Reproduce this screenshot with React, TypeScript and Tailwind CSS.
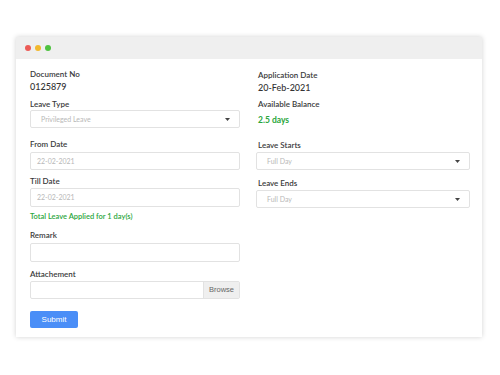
import React from 'react';

function Caret() {
  return (
    <svg width="5" height="3" viewBox="0 0 5 3" className="shrink-0">
      <path d="M0 0 L5 0 L2.5 3 Z" fill="#444" />
    </svg>
  );
}

function Label({ children, className = '' }: { children: React.ReactNode; className?: string }) {
  return <div className={`text-[8px] leading-[10px] font-semibold text-[#3a3a3a] ${className}`}>{children}</div>;
}

function Select({ value, className = '' }: { value: string; className?: string }) {
  return (
    <div className={`flex items-center justify-between border border-[#e2e2e2] rounded-[2px] bg-white pl-[10px] pr-[9px] ${className}`}>
      <span className="text-[7px] text-[#b8b8b8]">{value}</span>
      <Caret />
    </div>
  );
}

function Input({ value, className = '' }: { value?: string; className?: string }) {
  return (
    <div className={`flex items-center border border-[#e2e2e2] rounded-[2px] bg-white pl-[6px] ${className}`}>
      {value && <span className="text-[7px] text-[#b8b8b8]">{value}</span>}
    </div>
  );
}

export default function App() {
  return (
    <div className="w-[500px] h-[375px] bg-white pt-[37px] pl-[16px] font-['Lato','Noto_Sans',sans-serif]">
      <div className="w-[466px] h-[300px] bg-white shadow-[0_0_5px_rgba(0,0,0,0.18)] flex flex-col">
        <div className="h-[22px] bg-[#efefef] flex items-center gap-[4px] pl-[9px] shrink-0">
          <span className="w-[6px] h-[6px] rounded-full bg-[#ec5b56]" />
          <span className="w-[6px] h-[6px] rounded-full bg-[#f2b82e]" />
          <span className="w-[6px] h-[6px] rounded-full bg-[#4ec23f]" />
        </div>
        <div className="flex pl-[14px] gap-[16px]">
          <div className="w-[210px] flex flex-col pt-[10px]">
            <Label>Document No</Label>
            <div className="mt-[2px] text-[9px] leading-[12px] font-medium text-[#333]">0125879</div>
            <Label className="mt-[6px]">Leave Type</Label>
            <Select value="Privileged Leave" className="mt-[1px] h-[18px]" />
            <Label className="mt-[11px]">From Date</Label>
            <Input value="22-02-2021" className="mt-[3px] h-[18px]" />
            <Label className="mt-[6px]">Till Date</Label>
            <Input value="22-02-2021" className="mt-[2px] h-[19px]" />
            <div className="mt-[5px] text-[7.5px] leading-[10px] font-semibold text-[#2aa63c]">Total Leave Applied for 1 day(s)</div>
            <Label className="mt-[8px]">Remark</Label>
            <Input className="mt-[3px] h-[19px]" />
            <Label className="mt-[7px]">Attachement</Label>
            <div className="mt-[2px] h-[18px] flex border border-[#e2e2e2] rounded-[2px]">
              <div className="flex-1" />
              <div className="w-[36px] bg-[#efefef] border-l border-[#e2e2e2] flex items-center justify-center text-[7.5px] text-[#666] font-['Liberation_Sans',sans-serif]">Browse</div>
            </div>
            <div className="mt-[12px] w-[48px] h-[17px] bg-[#4a8ef7] rounded-[2px] flex items-center justify-center text-[8px] text-white font-['Liberation_Sans',sans-serif]">Submit</div>
          </div>
          <div className="w-[214px] flex flex-col pt-[11px]">
            <Label className="ml-[2px]">Application Date</Label>
            <div className="ml-[2px] mt-[2px] text-[9px] leading-[12px] font-medium text-[#333]">20-Feb-2021</div>
            <Label className="ml-[2px] mt-[5px]">Available Balance</Label>
            <div className="ml-[2px] mt-[5px] text-[8.5px] leading-[12px] font-bold text-[#2aa63c]">2.5 days</div>
            <Label className="ml-[2px] mt-[14px]">Leave Starts</Label>
            <Select value="Full Day" className="mt-[2px] h-[18px]" />
            <Label className="ml-[2px] mt-[8px]">Leave Ends</Label>
            <Select value="Full Day" className="mt-[2px] h-[18px]" />
          </div>
        </div>
      </div>
    </div>
  );
}
